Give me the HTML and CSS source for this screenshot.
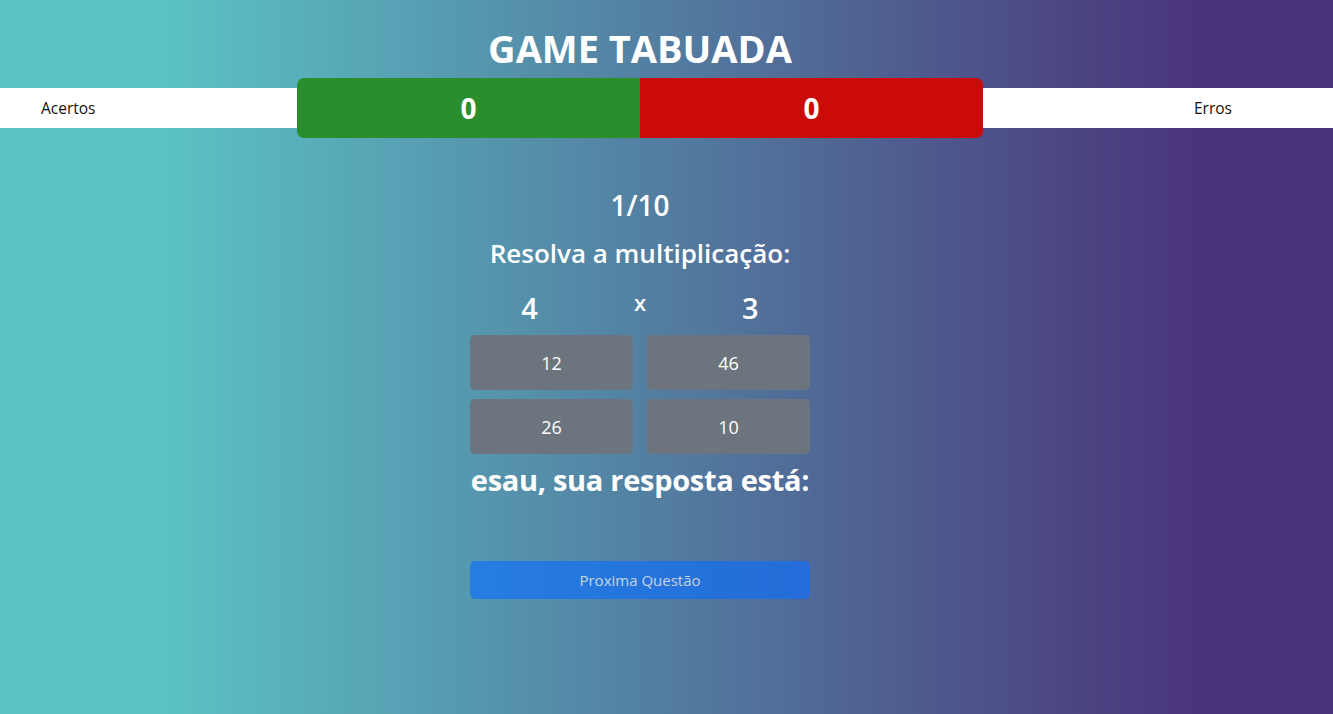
FILE: index.html
```html
<!DOCTYPE html>
<html lang="pt-BR">
<head>
<meta charset="utf-8">
<title>Game Tabuada</title>
<link rel="stylesheet" href="styles.css">
</head>
<body>
<div class="page">
  <h1 class="title">GAME TABUADA</h1>
  <div class="scoreboard">
    <div class="label label-left">Acertos</div>
    <div class="scores">
      <div class="score score-ok">0</div>
      <div class="score score-err">0</div>
    </div>
    <div class="label label-right">Erros</div>
  </div>
  <main class="game">
    <h2 class="progress">1/10</h2>
    <h3 class="prompt">Resolva a multiplicação:</h3>
    <div class="factors">
      <span class="factor">4</span>
      <span class="times">x</span>
      <span class="factor">3</span>
    </div>
    <div class="options">
      <button class="option">12</button>
      <button class="option">46</button>
      <button class="option">26</button>
      <button class="option">10</button>
    </div>
    <h2 class="feedback">esau, sua resposta está:</h2>
    <button class="next" disabled>Proxima Questão</button>
  </main>
</div>
</body>
</html>
```

FILE: styles.css
```css
* { box-sizing: border-box; }
html, body { margin: 0; padding: 0; }
body {
  min-height: 100vh;
  font-family: "Open Sans", "Noto Sans", sans-serif;
  color: #fff;
  background: linear-gradient(90deg, #5bc3c5 11.5%, #4a357b 89.5%);
}
.page { width: 1280px; }
.title {
  margin: 0;
  padding-top: 26px;
  height: 78px;
  font-size: 38px;
  font-weight: 700;
  line-height: 44px;
  text-align: center;
}
.scoreboard {
  width: 1333px;
  display: grid;
  grid-template-columns: 297px 686px 1fr;
  align-items: center;
  height: 60px;
}
.label {
  background: #fff;
  color: #111;
  height: 40px;
  font-size: 15.5px;
  line-height: 40px;
}
.label-left { padding-left: 41px; }
.label-right { padding-left: 211px; }
.scores {
  display: grid;
  grid-template-columns: 1fr 1fr;
  height: 60px;
  border-radius: 7px;
  overflow: hidden;
}
.score {
  display: flex;
  align-items: center;
  justify-content: center;
  font-size: 28px;
  font-weight: 700;
}
.score-ok { background: #2b8e2d; }
.score-err { background: #cb0a0a; }
.game {
  width: 340px;
  margin: 0 0 0 470px;
  display: flex;
  flex-direction: column;
  align-items: center;
}
.progress {
  margin: 47px 0 0;
  font-size: 28px;
  font-weight: 600;
  line-height: 40px;
}
.prompt {
  margin: 11px 0 0;
  font-size: 26px;
  font-weight: 600;
  line-height: 34px;
  white-space: nowrap;
}
.factors {
  width: 100%;
  display: grid;
  grid-template-columns: 1fr 1fr 1fr;
  margin-top: 18px;
  height: 40px;
}
.factor {
  text-align: center;
  font-size: 29px;
  font-weight: 600;
  line-height: 40px;
}
.factor:first-child { padding-left: 6px; }
.factor:last-child { padding-right: 6px; }
.times {
  text-align: center;
  font-size: 22px;
  font-weight: 600;
  line-height: 28px;
}
.options {
  width: 100%;
  display: grid;
  grid-template-columns: 1fr 1fr;
  column-gap: 14px;
  row-gap: 9px;
  margin-top: 7px;
}
.option {
  height: 55px;
  border: 0;
  border-radius: 5px;
  background: #6c757d;
  color: #fff;
  font-family: inherit;
  font-size: 18px;
}
.feedback {
  margin: 6px 0 0;
  font-size: 29px;
  font-weight: 700;
  line-height: 40px;
  white-space: nowrap;
  letter-spacing: -0.3px;
}
.next {
  width: 100%;
  height: 38px;
  margin-top: 61px;
  border: 0;
  border-radius: 5px;
  background: #0d6efd;
  color: #fff;
  opacity: 0.65;
  font-family: inherit;
  font-size: 15px;
}
```
